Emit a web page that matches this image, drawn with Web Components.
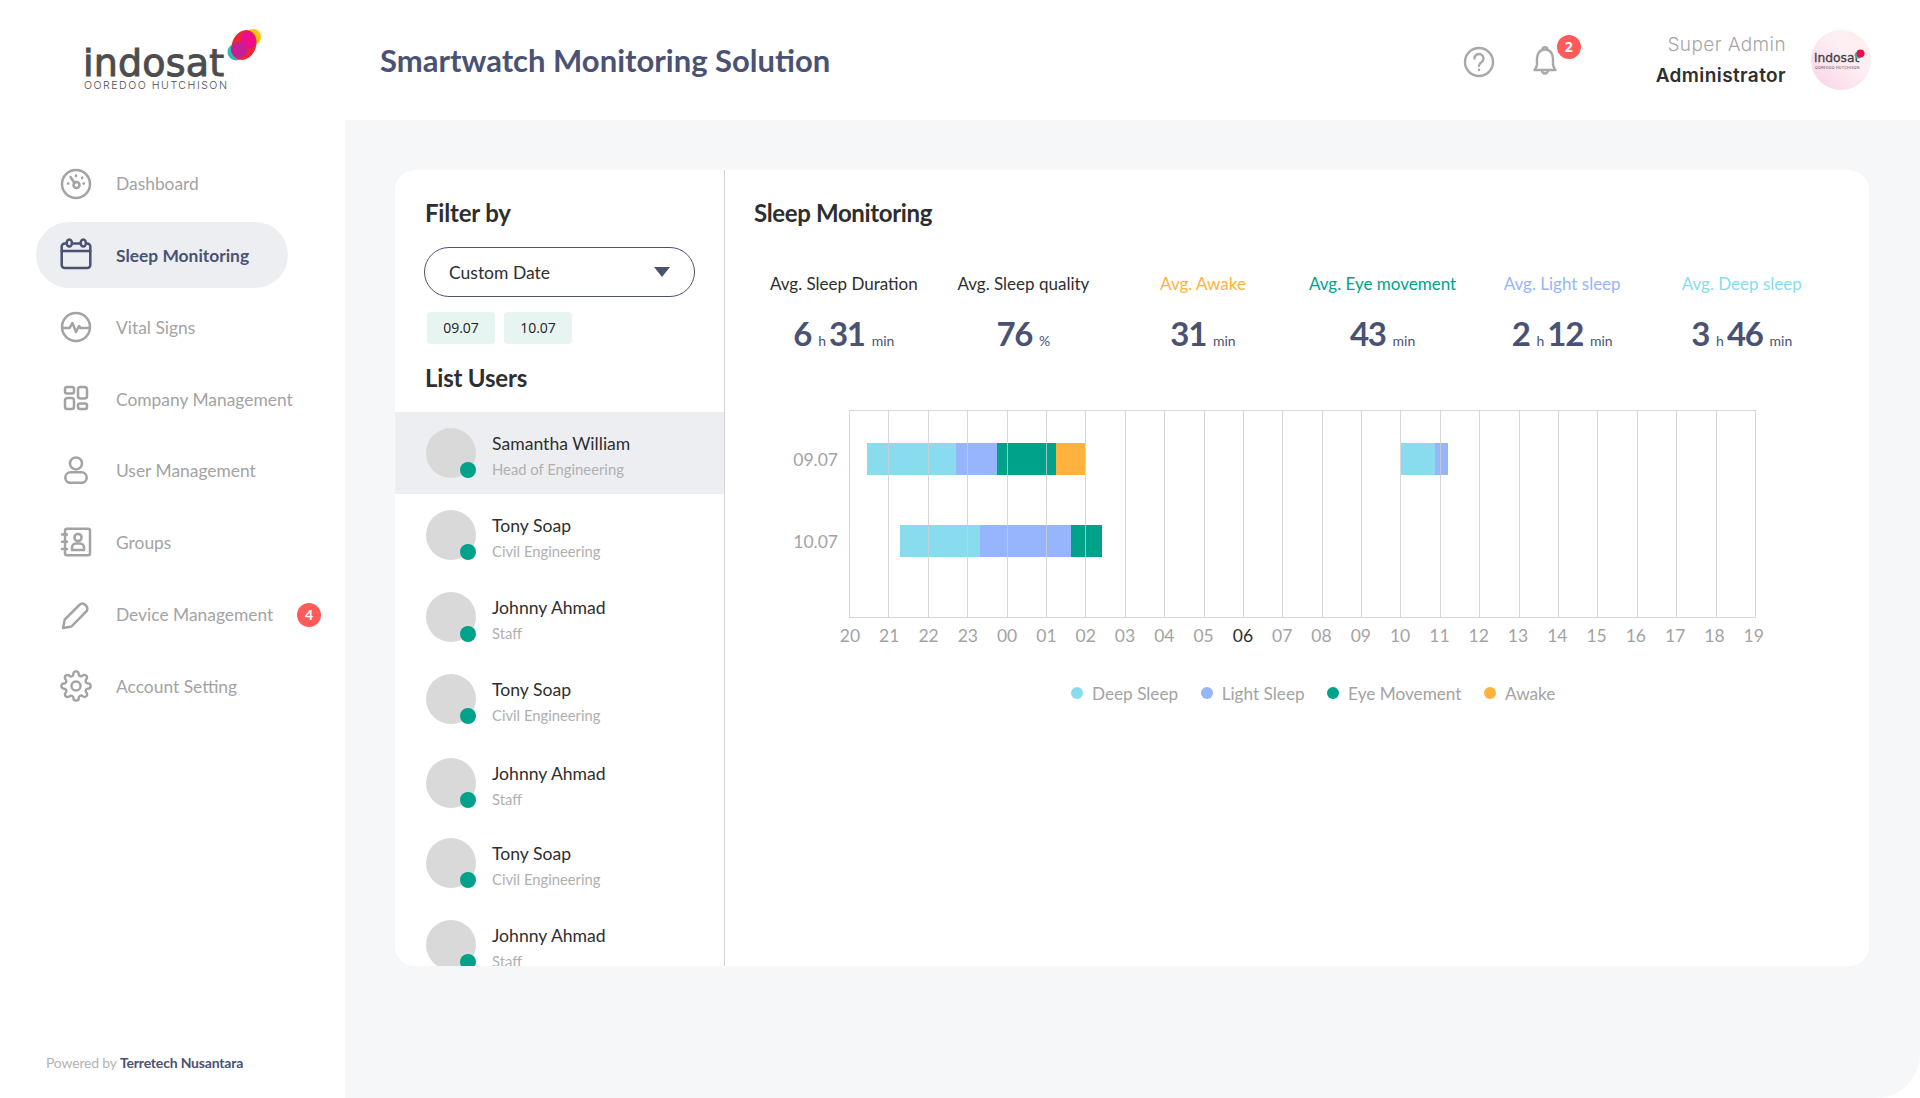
<!DOCTYPE html>
<html lang="en">
<head>
<meta charset="utf-8">
<title>Smartwatch Monitoring Solution</title>
<style>
  html, body { margin: 0; height: 100%; background: #fff; }
  body { font-family: Lato, "Noto Sans", sans-serif; }
</style>
</head>
<body>
<app-shell>
  <app-header slot="header" title-text="Smartwatch Monitoring Solution"></app-header>
  <side-bar slot="sidebar">
    <nav-item icon="dashboard">Dashboard</nav-item>
    <nav-item icon="calendar" active>Sleep Monitoring</nav-item>
    <nav-item icon="vital">Vital Signs</nav-item>
    <nav-item icon="company">Company Management</nav-item>
    <nav-item icon="user">User Management</nav-item>
    <nav-item icon="groups">Groups</nav-item>
    <nav-item icon="device" badge="4">Device Management</nav-item>
    <nav-item icon="gear">Account Setting</nav-item>
  </side-bar>
  <main-card slot="main">
    <filter-panel slot="left">
      <user-row name="Samantha William" role="Head of Engineering" active></user-row>
      <user-row name="Tony Soap" role="Civil Engineering"></user-row>
      <user-row name="Johnny Ahmad" role="Staff"></user-row>
      <user-row name="Tony Soap" role="Civil Engineering"></user-row>
      <user-row name="Johnny Ahmad" role="Staff" style="margin: 2px 0 -2px"></user-row>
      <user-row name="Tony Soap" role="Civil Engineering"></user-row>
      <user-row name="Johnny Ahmad" role="Staff"></user-row>
    </filter-panel>
    <sleep-panel slot="right">
      <stat-tile label="Avg. Sleep Duration" value="6 h 31 min"></stat-tile>
      <stat-tile label="Avg. Sleep quality" value="76 %"></stat-tile>
      <stat-tile label="Avg. Awake" value="31 min" color="#ffb23e"></stat-tile>
      <stat-tile label="Avg. Eye movement" value="43 min" color="#00a389"></stat-tile>
      <stat-tile label="Avg. Light sleep" value="2 h 12 min" color="#96b5fc"></stat-tile>
      <stat-tile label="Avg. Deep sleep" value="3 h 46 min" color="#89dcee"></stat-tile>
    </sleep-panel>
  </main-card>
</app-shell>

<script>
const ICONS = {
  dashboard: `<circle cx="18" cy="18" r="14"/><circle cx="18.5" cy="19" r="3"/><path d="M16.5 17 12.5 11M18 9.5v.4M25.5 17.5h.4M10 17.5h.4M24 12l.3-.3"/>`,
  calendar: `<rect x="3.7" y="6.5" width="28.6" height="24.5" rx="3"/><path d="M3.7 14h28.6"/><ellipse cx="11.3" cy="6" rx="2.6" ry="3.6" fill="#edeef2"/><ellipse cx="25.3" cy="6" rx="2.6" ry="3.6" fill="#edeef2"/>`,
  vital: `<circle cx="18" cy="18" r="14"/><path d="M4.5 19h7l3-5 3.5 9 3-6 1.5 2h9"/>`,
  company: `<rect x="7" y="6" width="9" height="6.4" rx="2"/><rect x="7" y="17" width="9" height="11" rx="2.6"/><rect x="20" y="6" width="9" height="11.5" rx="2.6"/><rect x="20" y="22.5" width="9" height="5.5" rx="2"/>`,
  user: `<circle cx="18" cy="10.4" r="6"/><rect x="7.3" y="19.3" width="21.4" height="10.5" rx="5.2"/>`,
  groups: `<rect x="7" y="3.7" width="25" height="26.6" rx="2"/><path d="M4 9.500h5M4 16.800h5M4 24h5"/><circle cx="20" cy="12.500" r="3.600"/><path d="M14 25v-2.500a4 4 0 0 1 4-4h4a4 4 0 0 1 4 4V25z"/>`,
  device: `<path d="M5 31l1.800-8.500L21.500 7.800a4 4 0 0 1 5.700 0l1 1a4 4 0 0 1 0 5.700L13.500 29.500z"/>`,
  gear: `<g transform="translate(2 2) scale(1.333)" stroke-width="1.800"><circle cx="12" cy="12" r="3.400"/><path d="M19.400 15a1.650 1.650 0 0 0 .33 1.820l.06.06a2 2 0 0 1 0 2.830 2 2 0 0 1-2.830 0l-.06-.06a1.650 1.650 0 0 0-1.820-.33 1.650 1.650 0 0 0-1 1.510V21a2 2 0 0 1-2 2 2 2 0 0 1-2-2v-.09A1.650 1.650 0 0 0 9 19.400a1.650 1.650 0 0 0-1.820.33l-.06.06a2 2 0 0 1-2.830 0 2 2 0 0 1 0-2.830l.06-.06a1.650 1.650 0 0 0 .33-1.820 1.650 1.650 0 0 0-1.510-1H3a2 2 0 0 1-2-2 2 2 0 0 1 2-2h.09A1.650 1.650 0 0 0 4.600 9a1.650 1.650 0 0 0-.33-1.820l-.06-.06a2 2 0 0 1 0-2.830 2 2 0 0 1 2.830 0l.06.06a1.650 1.650 0 0 0 1.820.33H9a1.650 1.650 0 0 0 1-1.510V3a2 2 0 0 1 2-2 2 2 0 0 1 2 2v.09a1.650 1.650 0 0 0 1 1.510 1.650 1.650 0 0 0 1.820-.33l.06-.06a2 2 0 0 1 2.830 0 2 2 0 0 1 0 2.830l-.06.06a1.650 1.650 0 0 0-.33 1.820V9a1.650 1.650 0 0 0 1.510 1H21a2 2 0 0 1 2 2 2 2 0 0 1-2 2h-.09a1.650 1.650 0 0 0-1.510 1z"/></g>`
};

class AppShell extends HTMLElement {
  constructor() {
    super();
    this.attachShadow({ mode: 'open' });
  }

  connectedCallback() {
    this.shadowRoot.innerHTML = `
      <style>
        :host {
          display: grid;
          grid-template-columns: 345px 1fr;
          grid-template-rows: 120px 978px;
          height: 1098px;
          background: #fff;
        }
        .top { grid-column: 1 / 3; }
        .main {
          background: #f6f7f9;
          border-bottom-right-radius: 44px;
          padding: 50px 51px 0 50px;
          min-width: 0;
        }
      </style>
      <div class="top"><slot name="header"></slot></div>
      <slot name="sidebar"></slot>
      <div class="main"><slot name="main"></slot></div>
    `;
  }
}

class AppHeader extends HTMLElement {
  constructor() {
    super();
    this.attachShadow({ mode: 'open' });
  }

  connectedCallback() {
    this.shadowRoot.innerHTML = `
      <style>
        :host {
          display: flex;
          align-items: center;
          height: 120px;
          font-family: Lato, sans-serif;
        }
        .logo {
          position: relative;
          width: 296px;
          margin-left: 84px;
          color: #4d4d4f;
          height: 78px;
        }
        .logo .word {
          font: 400 38px/30px "DejaVu Sans", sans-serif;
          letter-spacing: .2px;
          -webkit-text-stroke: 1px #4d4d4f;
          position: absolute;
          left: -1px;
          top: 27px;
        }
        .logo .sub {
          font: 300 10.6px/12px Inter, sans-serif;
          letter-spacing: 1.5px;
          position: absolute;
          left: 0;
          top: 59px;
          white-space: nowrap;
        }
        .logo svg { position: absolute; left: 143px; top: 7px; }
        h1 {
          margin: 0;
          font-size: 31px;
          font-weight: 700;
          color: #4a5274;
        }
        .actions {
          margin-left: auto;
          display: flex;
          align-items: center;
          padding-right: 49px;
        }
        .help { margin-top: 4px; }
        .bell { position: relative; margin: 5px 0 0 30px; width: 36px; height: 36px; }
        .bell i {
          position: absolute;
          left: 30px;
          top: -10px;
          width: 24px;
          height: 24px;
          border-radius: 50%;
          background: #ff5b5b;
          color: #fff;
          font: 700 14px/24px "Open Sans", sans-serif;
          text-align: center;
        }
        .who { margin-left: 93px; text-align: right; font-family: Inter, sans-serif; font-size: 19px; letter-spacing: .4px; }
        .who div:first-child { color: #a6a6a6; font-weight: 300; line-height: 30px; }
        .who div:last-child { color: #2e2e2e; font-weight: 600; line-height: 31px; }
        .avatar {
          position: relative;
          margin-left: 25px;
          width: 60px;
          height: 60px;
          border-radius: 50%;
          background: linear-gradient(45deg, #f9d3e4, #fdeef5 60%, #fdf0ea);
          color: #3f3f42;
          text-align: center;
        }
        .avatar b { position: absolute; left: 3px; top: 21px; font: 400 12.300px/14px "DejaVu Sans", sans-serif; -webkit-text-stroke: .3px #3f3f42; }
        .avatar span { position: absolute; left: 4px; top: 36px; font: 400 3.500px/4px Inter, sans-serif; letter-spacing: .3px; white-space: nowrap; }
        .avatar svg { position: absolute; left: 44px; top: 19px; }
      </style>
      <div class="logo">
        <span class="word">indosat</span>
        <span class="sub">OOREDOO HUTCHISON</span>
        <svg width="36" height="36" viewBox="0 0 36 36">
          <circle cx="26" cy="9" r="8" fill="#ffc20e"/>
          <circle cx="9" cy="24" r="8.500" fill="#26bfae"/>
          <ellipse cx="17" cy="17" rx="12" ry="15.500" fill="#ee2737" transform="rotate(22 17 17)"/>
          <ellipse cx="21" cy="12" rx="7.500" ry="9" fill="#ec0d8c" transform="rotate(-8 21 12)"/>
          <circle cx="12" cy="22" r="8" fill="#c41f97"/>
        </svg>
      </div>
      <h1>${this.getAttribute('title-text')}</h1>
      <div class="actions">
        <svg class="help" width="36" height="36" viewBox="0 0 36 36" fill="none" stroke="#a8a8a8" stroke-width="2.400" stroke-linecap="round">
          <circle cx="18" cy="18" r="14"/>
          <path d="M13.500 14.500a4.500 4.500 0 1 1 7 3.700c-1.600 1-2.500 1.800-2.500 3.600"/>
          <path d="M18 25.800v.1"/>
        </svg>
        <div class="bell">
          <svg width="36" height="36" viewBox="0 0 36 36" fill="none" stroke="#a8a8a8" stroke-width="2.400" stroke-linejoin="round">
            <path d="M18 4.500c-5 0-8 4-8 9v6c0 2-1.300 3.500-2.500 5.500h21c-1.200-2-2.500-3.500-2.500-5.500v-6c0-5-3-9-8-9z"/>
            <path d="M15.500 4.800a2.500 2.500 0 0 1 5 0M15 25.500a3 3 0 0 0 6 0"/>
          </svg>
          <i>2</i>
        </div>
        <div class="who">
          <div>Super Admin</div>
          <div>Administrator</div>
        </div>
        <div class="avatar">
          <b>indosat</b>
          <span>OOREDOO HUTCHISON</span>
          <svg width="10" height="10" viewBox="0 0 10 10">
            <circle cx="3.500" cy="6" r="3.500" fill="#26bfae"/>
            <circle cx="5.500" cy="4.500" r="4" fill="#ec0d4c"/>
          </svg>
        </div>
      </div>
    `;
  }
}

class SideBar extends HTMLElement {
  constructor() {
    super();
    this.attachShadow({ mode: 'open' });
  }

  connectedCallback() {
    this.shadowRoot.innerHTML = `
      <style>
        :host {
          display: flex;
          flex-direction: column;
          padding: 30.500px 0 0 36px;
          gap: 5.850px;
          position: relative;
          font-family: Lato, sans-serif;
        }
        footer {
          margin-top: auto;
          margin-left: 10px;
          padding-bottom: 26px;
          font-size: 14px;
          line-height: 18px;
          color: #b3b3b3;
          letter-spacing: -.18px;
        }
        footer b { color: #4a5274; font-weight: 700; }
      </style>
      <slot></slot>
      <footer>Powered by <b>Terretech Nusantara</b></footer>
    `;
  }
}

class NavItem extends HTMLElement {
  constructor() {
    super();
    this.attachShadow({ mode: 'open' });
  }

  connectedCallback() {
    const badge = this.getAttribute('badge');
    this.shadowRoot.innerHTML = `
      <style>
        :host {
          display: flex;
          align-items: center;
          position: relative;
          width: 252px;
          height: 66px;
          box-sizing: border-box;
          padding-left: 22px;
          gap: 22px;
          border-radius: 33px;
          font-size: 17.400px;
          color: #a3a3a3;
          white-space: nowrap;
        }
        :host([active]) {
          background: #edeef2;
          color: #4a5274;
          font-weight: 700;
        }
        svg { flex: none; fill: none; stroke: currentColor; stroke-width: 2.500; stroke-linecap: round; stroke-linejoin: round; }
        i {
          position: absolute;
          left: 261px;
          top: 21px;
          width: 24px;
          height: 24px;
          border-radius: 50%;
          background: #ff5b5b;
          color: #fff;
          font: 700 14px/24px Lato, sans-serif;
          text-align: center;
        }
      </style>
      <svg width="36" height="36" viewBox="0 0 36 36">${ICONS[this.getAttribute('icon')]}</svg>
      <slot></slot>
      ${badge ? `<i>${badge}</i>` : ''}
    `;
  }
}

class MainCard extends HTMLElement {
  constructor() {
    super();
    this.attachShadow({ mode: 'open' });
  }

  connectedCallback() {
    this.shadowRoot.innerHTML = `
      <style>
        :host {
          display: grid;
          grid-template-columns: 330px 1fr;
          height: 796px;
          background: #fff;
          border-radius: 20px;
          overflow: hidden;
        }
      </style>
      <slot name="left"></slot>
      <slot name="right"></slot>
    `;
  }
}

class FilterPanel extends HTMLElement {
  constructor() {
    super();
    this.attachShadow({ mode: 'open' });
  }

  connectedCallback() {
    this.shadowRoot.innerHTML = `
      <style>
        :host {
          display: flex;
          flex-direction: column;
          border-right: 1px solid #d6d6d6;
          height: 796px;
          overflow: hidden;
          box-sizing: border-box;
          font-family: Lato, sans-serif;
          color: #2e2e2e;
        }
        h2 { margin: 0; font-size: 24px; line-height: 30px; font-weight: 700; padding-left: 30px; letter-spacing: -.2px; }
        .top { padding-top: 28px; }
        .select {
          display: flex;
          align-items: center;
          justify-content: space-between;
          box-sizing: border-box;
          width: 271px;
          height: 50px;
          margin: 19px 0 0 29px;
          padding: 0 24px 0 24px;
          border: 1px solid #4a5274;
          border-radius: 25px;
          font-size: 17.500px;
        }
        .select svg { display: block; }
        .chips { display: flex; gap: 9px; margin: 15px 0 0 32px; }
        .chip {
          width: 68px;
          height: 32px;
          border-radius: 4px;
          background: #e6f5f2;
          font: 400 14px/32px "Open Sans", sans-serif;
          text-align: center;
          color: #222;
        }
        .users { margin: 19px 0 19px; }
      </style>
      <div class="top">
        <h2>Filter by</h2>
        <div class="select">
          <span>Custom Date</span>
          <svg width="16" height="10" viewBox="0 0 16 10"><path d="M0 0h16L8 10z" fill="#4a5274"/></svg>
        </div>
        <div class="chips"><div class="chip">09.07</div><div class="chip">10.07</div></div>
        <h2 class="users">List Users</h2>
      </div>
      <slot></slot>
    `;
  }
}

class UserRow extends HTMLElement {
  constructor() {
    super();
    this.attachShadow({ mode: 'open' });
  }

  connectedCallback() {
    this.shadowRoot.innerHTML = `
      <style>
        :host {
          display: flex;
          flex: none;
          align-items: center;
          height: 82px;
          box-sizing: border-box;
          padding-left: 31px;
          gap: 16px;
        }
        :host([active]) { background: #edeef2; }
        .pic {
          position: relative;
          flex: none;
          width: 50px;
          height: 50px;
          border-radius: 50%;
          background: #d9d9d9;
        }
        .pic::after {
          content: "";
          position: absolute;
          right: 0;
          bottom: 0;
          width: 16px;
          height: 16px;
          border-radius: 50%;
          background: #00a389;
        }
        .text { padding-top: 6px; }
        .name { font-size: 17.600px; line-height: 26px; color: #2e2e2e; }
        .role { font-size: 14.800px; line-height: 24px; color: #b0b0b0; }
      </style>
      <div class="pic"></div>
      <div class="text">
        <div class="name">${this.getAttribute('name')}</div>
        <div class="role">${this.getAttribute('role')}</div>
      </div>
    `;
  }
}

class SleepPanel extends HTMLElement {
  constructor() {
    super();
    this.attachShadow({ mode: 'open' });
  }

  connectedCallback() {
    this.shadowRoot.innerHTML = `
      <style>
        :host {
          display: block;
          padding: 28px 0 0 29px;
          font-family: Lato, sans-serif;
          color: #2e2e2e;
        }
        h2 { margin: 0; font-size: 24px; line-height: 30px; font-weight: 700; letter-spacing: -.35px; }
        .stats {
          display: grid;
          grid-template-columns: repeat(6, 179.600px);
          margin-top: 41px;
        }
      </style>
      <h2>Sleep Monitoring</h2>
      <div class="stats"><slot></slot></div>
      <sleep-chart></sleep-chart>
    `;
  }
}

class StatTile extends HTMLElement {
  constructor() {
    super();
    this.attachShadow({ mode: 'open' });
  }

  connectedCallback() {
    const parts = this.getAttribute('value').split(' ');
    const value = parts.map((part, i) => (i % 2 ? `<small>${part}</small>` : `<b>${part}</b>`)).join('');

    this.shadowRoot.innerHTML = `
      <style>
        :host { display: block; text-align: center; }
        .label { font-size: 17px; line-height: 30px; white-space: nowrap; color: ${this.getAttribute('color') || '#2e2e2e'}; }
        .value { margin-top: 15px; line-height: 38px; color: #4a5274; }
        b { font-size: 33px; font-weight: 700; letter-spacing: -1.300px; }
        small { font-size: 14px; margin: 0 3px 0 7px; }
        small:last-child { margin-right: 0; }
      </style>
      <div class="label">${this.getAttribute('label')}</div>
      <div class="value">${value}</div>
    `;
  }
}

class SleepChart extends HTMLElement {
  constructor() {
    super();
    this.attachShadow({ mode: 'open' });
    this._hours = ['20','21','22','23','00','01','02','03','04','05','06','07','08','09','10','11','12','13','14','15','16','17','18','19'];
    this._colors = { deep: '#89dcee', light: '#96b5fc', eye: '#00a389', awake: '#ffb23e' };
    // left and right edge of each block, in px from the start of the plot
    this._rows = [
      { label: '09.07', blocks: [[18, 107, 'deep'], [107, 148, 'light'], [148, 207, 'eye'], [207, 236, 'awake'], [552, 586, 'deep'], [586, 599, 'light']] },
      { label: '10.07', blocks: [[51, 131, 'deep'], [131, 222, 'light'], [222, 253, 'eye']] }
    ];
  }

  connectedCallback() {
    const rows = this._rows.map((row) => {
      const blocks = row.blocks.map(([from, to, kind]) => (
        `<span style="left:${from}px;width:${to - from}px;background:${this._colors[kind]}"></span>`
      )).join('');
      return `<div class="row">${blocks}</div>`;
    }).join('');

    this.shadowRoot.innerHTML = `
      <style>
        :host { display: block; margin-top: 50px; font-size: 17.500px; color: #a3a3a3; }
        .chart { display: flex; }
        .names {
          width: 84px;
          padding: 34px 11px 0 0;
          display: flex;
          flex-direction: column;
          gap: 50px;
          text-align: right;
        }
        .names div { height: 32px; line-height: 32px; }
        .plot {
          position: relative;
          width: 907px;
          height: 208px;
          box-sizing: border-box;
          padding-top: 33px;
          display: flex;
          flex-direction: column;
          gap: 50px;
        }
        .row { position: relative; height: 32px; }
        .row span { position: absolute; top: 0; height: 32px; }
        .grid {
          position: absolute;
          inset: 0;
          display: flex;
          border: solid rgba(205, 205, 205, .8);
          border-width: 1px 1px 1px 0;
          box-sizing: border-box;
        }
        .grid i { flex: 1; border-left: 1px solid rgba(205, 205, 205, .8); }
        .hours {
          display: flex;
          width: 943.200px;
          margin: 6px 0 0 76.300px;
          line-height: 24px;
        }
        .hours span { flex: 1; text-align: center; }
        .hours .now { color: #2e2e2e; }
        .legend {
          display: flex;
          align-items: center;
          gap: 22.500px;
          margin: 33px 0 0 317px;
          line-height: 26px;
          font-size: 17.200px;
        }
        .legend span { display: flex; align-items: center; gap: 9px; }
        .legend i { width: 12px; height: 12px; border-radius: 50%; margin-top: -2px; }
      </style>
      <div class="chart">
        <div class="names">${this._rows.map((row) => `<div>${row.label}</div>`).join('')}</div>
        <div class="plot">
          ${rows}
          <div class="grid">${'<i></i>'.repeat(23)}</div>
        </div>
      </div>
      <div class="hours">${this._hours.map((h) => `<span class="${h === '06' ? 'now' : ''}">${h}</span>`).join('')}</div>
      <div class="legend">
        <span><i style="background:${this._colors.deep}"></i>Deep Sleep</span>
        <span><i style="background:${this._colors.light}"></i>Light Sleep</span>
        <span><i style="background:${this._colors.eye}"></i>Eye Movement</span>
        <span><i style="background:${this._colors.awake}"></i>Awake</span>
      </div>
    `;
  }
}

customElements.define('app-shell', AppShell);
customElements.define('app-header', AppHeader);
customElements.define('side-bar', SideBar);
customElements.define('nav-item', NavItem);
customElements.define('main-card', MainCard);
customElements.define('filter-panel', FilterPanel);
customElements.define('user-row', UserRow);
customElements.define('sleep-panel', SleepPanel);
customElements.define('stat-tile', StatTile);
customElements.define('sleep-chart', SleepChart);
</script>
</body>
</html>
